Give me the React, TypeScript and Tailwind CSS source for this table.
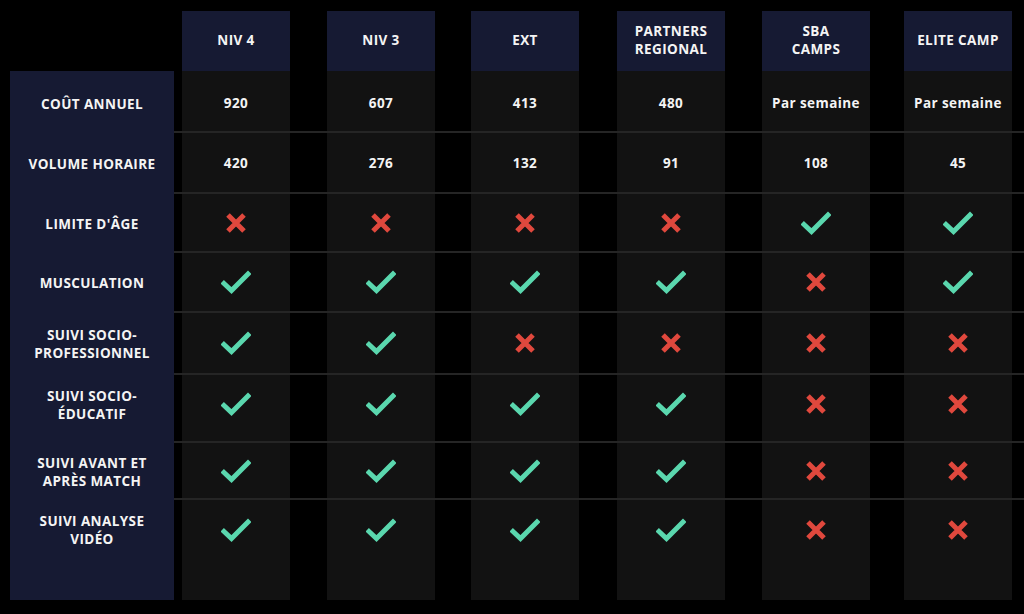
import React from "react";

type Cell = string | "Y" | "N";

const headers: React.ReactNode[] = [
  "NIV 4",
  "NIV 3",
  "EXT",
  <>PARTNERS<br />REGIONAL</>,
  <>SBA<br />CAMPS</>,
  "ELITE CAMP",
];

const gaps = ["", "ml-[37px]", "ml-[36px]", "ml-[38px]", "ml-[37px]", "ml-[34px]"];

const rows: { label: React.ReactNode; cells: Cell[]; h: string; pad: string }[] = [
  { label: "COÛT ANNUEL", cells: ["920", "607", "413", "480", "Par semaine", "Par semaine"], h: "h-[62px]", pad: "pt-[3px]" },
  { label: "VOLUME HORAIRE", cells: ["420", "276", "132", "91", "108", "45"], h: "h-[61px]", pad: "" },
  { label: "LIMITE D'ÂGE", cells: ["N", "N", "N", "N", "Y", "Y"], h: "h-[59px]", pad: "" },
  { label: "MUSCULATION", cells: ["Y", "Y", "Y", "Y", "N", "Y"], h: "h-[60px]", pad: "" },
  { label: <>SUIVI SOCIO-<br />PROFESSIONNEL</>, cells: ["Y", "Y", "N", "N", "N", "N"], h: "h-[62px]", pad: "" },
  { label: <>SUIVI SOCIO-<br />ÉDUCATIF</>, cells: ["Y", "Y", "Y", "Y", "N", "N"], h: "h-[68px]", pad: "pb-[8px]" },
  { label: <>SUIVI AVANT ET<br />APRÈS MATCH</>, cells: ["Y", "Y", "Y", "Y", "N", "N"], h: "h-[57px]", pad: "" },
  { label: <>SUIVI ANALYSE<br />VIDÉO</>, cells: ["Y", "Y", "Y", "Y", "N", "N"], h: "h-[100px]", pad: "pb-[40px]" },
];

function Check() {
  return (
    <svg width="30" height="24" viewBox="0 0 30 24" fill="none">
      <path d="M3 13.5 L10.5 20.5 L27 4" stroke="#5ad7ae" strokeWidth="5" strokeLinecap="square" strokeLinejoin="miter" />
    </svg>
  );
}

function Cross() {
  return (
    <svg width="24" height="22" viewBox="0 0 24 22" fill="none">
      <path d="M4 3 L20 19 M20 3 L4 19" stroke="#e0483d" strokeWidth="5" strokeLinecap="butt" />
    </svg>
  );
}

export default function App() {
  return (
    <div className="w-[1024px] h-[614px] bg-black text-[#f4f4f4] font-['Open_Sans',sans-serif] text-[13.5px] font-bold tracking-[0.03em] leading-[18px] overflow-hidden">
      <div className="flex pt-[11px]">
        <div className="w-[174px] shrink-0" />
        <div className="flex-1 flex pl-[8px]">
          {headers.map((h, i) => (
            <div key={i} className={`w-[108px] h-[60px] bg-[#161a33] flex items-center justify-center text-center pb-[2px] ${gaps[i]}`}>
              {h}
            </div>
          ))}
        </div>
      </div>
      {rows.map((r, ri) => (
        <div key={ri} className={`flex ${r.h}`}>
          <div className={`ml-[10px] w-[164px] shrink-0 bg-[#161a33] flex items-center justify-center text-center ${r.pad}`}>
            {r.label}
          </div>
          <div
            className={`flex-1 flex pl-[8px] ${
              ri < rows.length - 1 ? "border-b-2 border-[#252525]" : ""
            }`}
          >
            {r.cells.map((c, ci) => (
              <div key={ci} className={`w-[108px] bg-[#121212] flex items-center justify-center text-center ${gaps[ci]} ${r.pad}`}>
                {c === "Y" ? <Check /> : c === "N" ? <Cross /> : c}
              </div>
            ))}
          </div>
        </div>
      ))}
    </div>
  );
}
